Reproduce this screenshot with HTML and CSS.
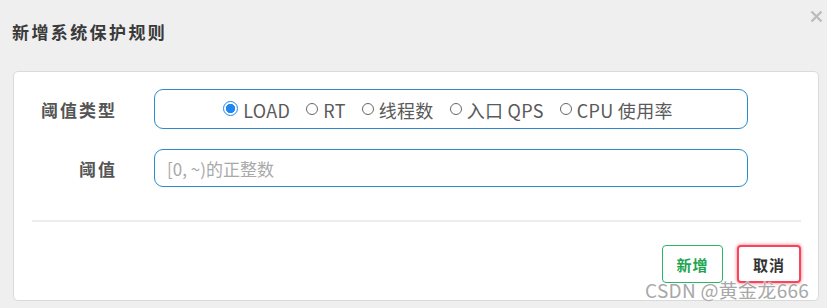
FILE: index.html
```html
<!DOCTYPE html>
<html lang="zh-CN">
<head>
<meta charset="utf-8">
<title>新增系统保护规则</title>
<link rel="stylesheet" href="styles.css">
</head>
<body>
<div class="dialog">
  <div class="dialog-header">
    <h1 class="dialog-title">新增系统保护规则</h1>
    <span class="close" aria-label="关闭">
      <svg width="13" height="13" viewBox="0 0 13 13"><path d="M1.5 1.5 L11.5 11.5 M11.5 1.5 L1.5 11.5" stroke="#bcbcbc" stroke-width="2.4" stroke-linecap="butt"/></svg>
    </span>
  </div>
  <div class="panel">
    <div class="form-row row-type">
      <label class="form-label">阈值类型</label>
      <div class="radio-box">
        <span class="radio-item"><span class="radio checked"></span>LOAD</span>
        <span class="radio-item"><span class="radio"></span>RT</span>
        <span class="radio-item"><span class="radio"></span>线程数</span>
        <span class="radio-item"><span class="radio"></span>入口 QPS</span>
        <span class="radio-item"><span class="radio"></span>CPU 使用率</span>
      </div>
    </div>
    <div class="form-row row-value">
      <label class="form-label">阈值</label>
      <div class="input-box"><span class="placeholder">[0, ~)的正整数</span></div>
    </div>
    <div class="divider"></div>
    <div class="actions">
      <button class="btn btn-add">新增</button>
      <button class="btn btn-cancel">取消</button>
    </div>
  </div>
  <div class="watermark">CSDN @黄金龙666</div>
</div>
</body>
</html>
```

FILE: styles.css
```css
html, body {
  margin: 0;
  padding: 0;
}
body {
  width: 827px;
  height: 308px;
  background: #efefef;
  font-family: "Noto Sans CJK SC", "Noto Sans", sans-serif;
  overflow: hidden;
}
.dialog {
  position: relative;
  height: 308px;
}
.dialog-header {
  height: 71px;
  box-sizing: border-box;
  padding: 19px 0 0 12px;
}
.dialog-title {
  margin: 0;
  font-size: 17px;
  line-height: 26px;
  font-weight: 700;
  color: #3a3a3a;
  letter-spacing: 2.4px;
}
.close {
  position: absolute;
  left: 810px;
  top: 10px;
  width: 13px;
  height: 13px;
  display: block;
}
.close svg { display: block; }
.panel {
  margin: 0 8px 0 13px;
  height: 230px;
  box-sizing: border-box;
  background: #fff;
  border: 1px solid #dadada;
  border-radius: 5px;
  padding: 17px 17px 17px 0;
  display: flex;
  flex-direction: column;
}
.form-row {
  display: flex;
  align-items: center;
  padding-right: 53px;
}
.row-value { margin-top: 20px; }
.form-label {
  width: 103px;
  margin-right: 37px;
  text-align: right;
  font-size: 17px;
  font-weight: 700;
  color: #555;
  letter-spacing: 2px;
}
.radio-box, .input-box {
  flex: 1;
  box-sizing: border-box;
  border: 1.6px solid #2a8ccb;
  border-radius: 9px;
}
.radio-box {
  height: 40px;
  display: flex;
  align-items: center;
  justify-content: center;
  gap: 16px;
  padding-right: 6px;
  padding-top: 2px;
  font-size: 18px;
  letter-spacing: 0.3px;
  color: #5a5a5a;
}
.radio-item {
  display: inline-flex;
  align-items: center;
  gap: 5px;
  white-space: nowrap;
}
.radio {
  width: 12px;
  height: 12px;
  box-sizing: border-box;
  border: 1.3px solid #666;
  border-radius: 50%;
  background: #fff;
  margin-top: -3px;
}
.radio.checked {
  width: 15px;
  height: 15px;
  border: 1.5px solid #1e87f0;
  background: radial-gradient(circle, #1e87f0 0 4.4px, #fff 4.8px);
}
.input-box {
  height: 38px;
  display: flex;
  align-items: center;
  padding-left: 12px;
}
.placeholder {
  font-size: 17px;
  color: #a9a9a9;
}
.divider {
  margin: 33px 0 0 18px;
  height: 2px;
  background: #ececec;
}
.actions {
  margin-top: 23px;
  display: flex;
  justify-content: flex-end;
  gap: 14px;
}
.btn {
  height: 38px;
  box-sizing: border-box;
  border-radius: 4px;
  background: #fff;
  font-family: inherit;
  font-size: 15px;
  font-weight: 700;
  padding: 0;
  letter-spacing: 1px;
}
.btn-add {
  width: 61px;
  border: 1.5px solid #29b665;
  color: #1ea552;
}
.btn-cancel {
  width: 64px;
  border: 2px solid #f4475c;
  box-shadow: 0 0 3px 1px rgba(255, 90, 110, 0.55);
  color: #333;
}
.watermark {
  position: absolute;
  left: 645px;
  top: 278px;
  font-size: 19px;
  line-height: 24px;
  color: #a8a8a8;
  text-shadow: 0 0 1px #fff, 0 0 1px #fff;
  letter-spacing: 0.3px;
}
```
